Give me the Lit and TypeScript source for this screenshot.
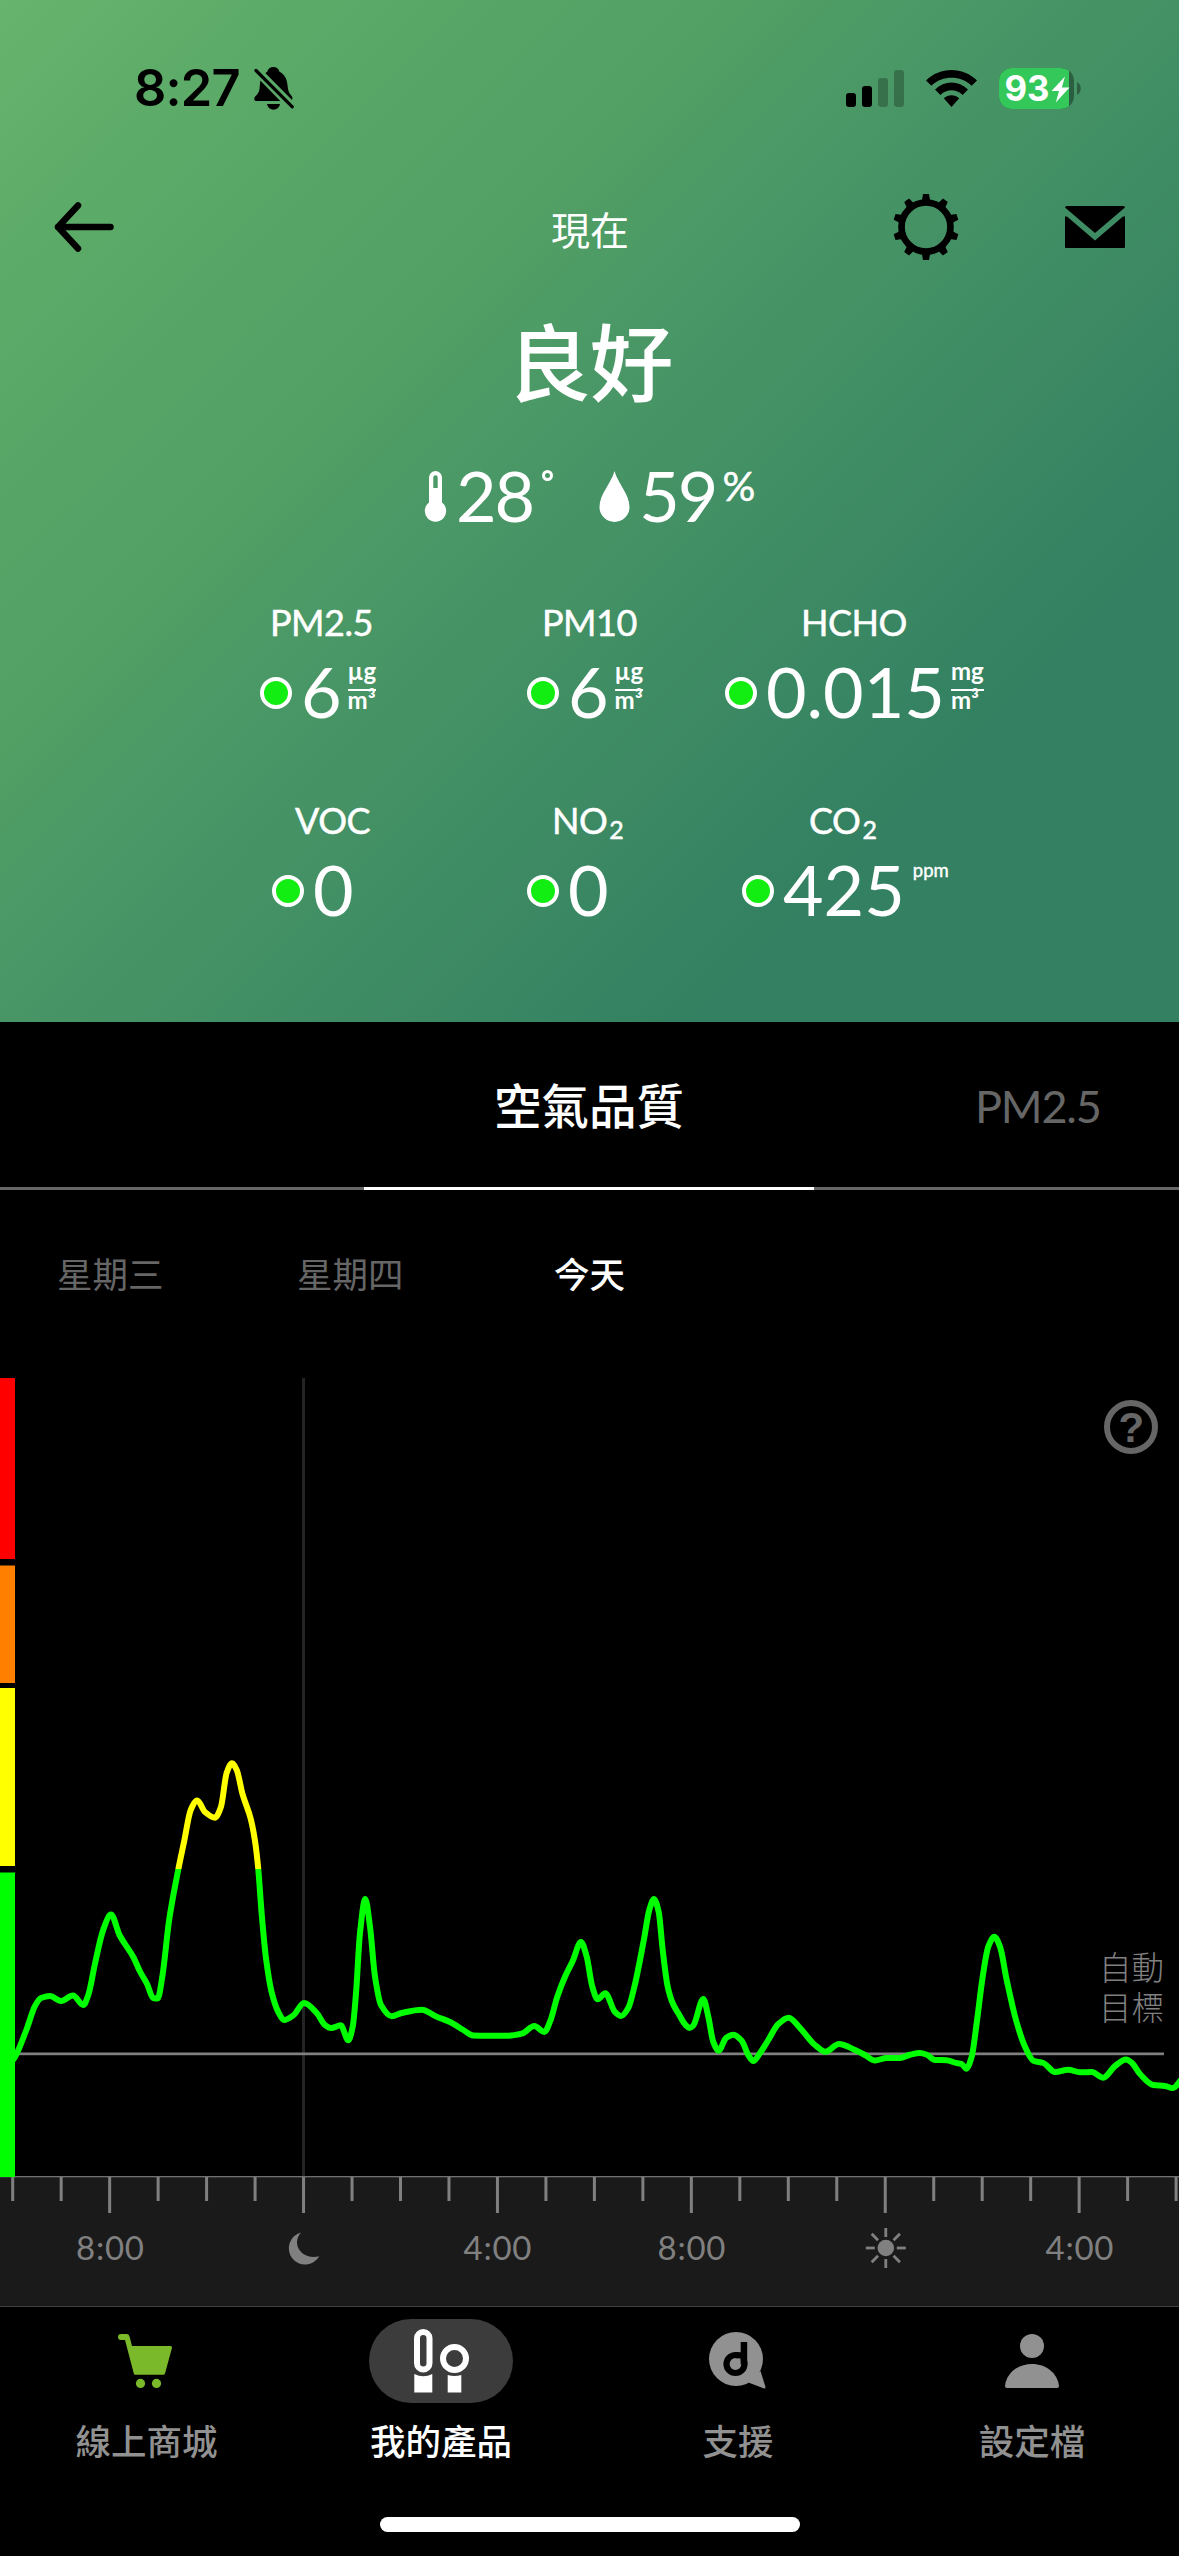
import { LitElement, html, svg, css } from "lit";
import { customElement } from "lit/decorators.js";

type Pt = [number, number];

interface Reading {
  label: string;
  sub?: string;
  value: string;
  top?: string;
  bottom?: string;
  labelInset: number;
  valueInset: number;
}

const READINGS: Reading[] = [
  { label: "PM2.5", value: "6", top: "µg", bottom: "m³", labelInset: 10, valueInset: 0 },
  { label: "PM10", value: "6", top: "µg", bottom: "m³", labelInset: 15, valueInset: 0 },
  { label: "HCHO", value: "0.015", top: "mg", bottom: "m³", labelInset: 76, valueInset: 0 },
  { label: "VOC", value: "0", labelInset: 35, valueInset: 12 },
  { label: "NO", sub: "2", value: "0", labelInset: 25, valueInset: 0 },
  { label: "CO", sub: "2", value: "425", top: "ppm", labelInset: 84, valueInset: 17 },
];

const SAMPLES: Pt[] = [
  [12, 2061], [15, 2057], [26.7, 2029], [35, 2006], [41, 1998], [50, 1996], [61, 2001], [73, 1995.5], [83.3, 2005],
  [88.3, 1995], [95, 1963.6], [103.3, 1929.6], [111, 1914.5], [119.5, 1935], [133.3, 1957], [140, 1971.5],
  [147.3, 1984.5], [153, 1998], [157.7, 1998.5], [162.3, 1976.7], [169.3, 1919], [178.3, 1869.5], [184.3, 1840.7],
  [190.7, 1810], [197.3, 1800.5], [205, 1812], [215, 1817.7], [221, 1806.7], [226.7, 1772.7], [232, 1763.3],
  [236.7, 1770], [242.7, 1794.7], [250.7, 1818.7], [255.3, 1843], [258.3, 1869.5], [261.7, 1914], [266, 1958.4],
  [271.7, 1992.4], [278.3, 2012], [284, 2020], [293.3, 2015.4], [304, 2003], [316.7, 2013], [325, 2025], [331, 2028],
  [340.7, 2025.3], [348.3, 2040.3], [352.7, 2026.7], [356, 1993.3], [360, 1933], [365.3, 1899], [370, 1926.7],
  [375, 1976.7], [381, 2005], [391.7, 2016.3], [401.7, 2013], [421.7, 2009.7], [436.7, 2016.7], [450, 2022],
  [463.3, 2030], [473.3, 2035.5], [486.7, 2035.7], [508.3, 2035.7], [521.7, 2033.7], [534.3, 2026], [544.3, 2032],
  [550, 2021.7], [557.3, 1996.7], [565, 1976.7], [572.7, 1961], [581, 1942], [586.7, 1956.7], [592.3, 1986.7],
  [597.7, 1999.3], [605.3, 1993.3], [615, 2012], [621, 2016], [628.3, 2008], [635, 1984], [644, 1939],
  [649.3, 1910], [654, 1899], [658.7, 1912], [662.7, 1950], [667.7, 1986.7], [672.7, 2003.3], [678.3, 2013.3],
  [686, 2025.5], [689.5, 2028], [693.3, 2025.5], [703.3, 1999], [708.3, 2016.7], [713.3, 2042], [718.7, 2050.7],
  [726, 2038], [733.3, 2034.7], [741.7, 2040.7], [748.3, 2055], [753.3, 2061], [760, 2053], [768.3, 2040],
  [778.3, 2024], [788.7, 2017.7], [800, 2028], [815, 2045], [825.3, 2051.7], [839, 2044], [855, 2050], [865, 2055],
  [875, 2060.5], [886.7, 2058], [900, 2058], [910, 2054.7], [920, 2053], [926.7, 2054.7], [935, 2060],
  [946.7, 2060.2], [955, 2062.7], [961.7, 2064], [966.3, 2068.7], [971.7, 2056.7], [976.7, 2023], [982.7, 1976.7],
  [988.3, 1946.7], [994.3, 1936.7], [1000, 1946.7], [1006.7, 1980], [1016, 2020], [1025, 2046.7], [1033.3, 2060.7],
  [1043.3, 2063], [1055, 2072], [1068.3, 2069.7], [1080, 2072.3], [1091.7, 2072], [1103.3, 2077.7], [1115, 2066],
  [1126, 2059.5], [1131.7, 2062.7], [1140, 2074], [1153.3, 2085], [1165, 2086], [1172.7, 2088], [1182, 2079],
];

/** Monotone cubic interpolation, so that peaks stay at the samples. */
function curve(p: Pt[]): string {
  const n = p.length;
  const d = p.slice(1).map((q, i) => (q[1] - p[i][1]) / (q[0] - p[i][0]));
  const m = p.map((_, i) => {
    if (i === 0) return d[0];
    if (i === n - 1) return d[n - 2];
    if (d[i - 1] * d[i] <= 0) return 0;
    return (2 * d[i - 1] * d[i]) / (d[i - 1] + d[i]);
  });
  let out = `M${p[0][0]} ${p[0][1]}`;
  for (let i = 0; i < n - 1; i++) {
    const h = (p[i + 1][0] - p[i][0]) / 3;
    out += `C${(p[i][0] + h).toFixed(2)} ${(p[i][1] + m[i] * h).toFixed(2)} ${(p[i + 1][0] - h).toFixed(2)} ${(
      p[i + 1][1] - m[i + 1] * h
    ).toFixed(2)} ${p[i + 1][0]} ${p[i + 1][1]}`;
  }
  return out;
}

@customElement("status-bar")
export class StatusBar extends LitElement {
  static styles = css`
    :host { display: flex; height: 174px; box-sizing: border-box; padding: 64px 98px 0 134px; justify-content: space-between; color: #000; }
    .left, .right { display: flex; height: 48px; align-items: center; }
    .time { font: 600 50.500px/48px Inter, sans-serif; letter-spacing: -0.8px; }
    .bell { margin-left: 13px; }
    .wifi { margin-left: 22px; }
    .battery { margin-left: 22px; }
    svg { display: block; overflow: visible; }
    .level { font: 700 35px Inter, sans-serif; fill: #fff; }
  `;
  render() {
    return html`
      <div class="left">
        <span class="time">8:27</span>
        <svg class="bell" width="42" height="48" viewBox="0 0 42 48">
          <path d="M20.300 3C23.500 3 25.800 4.600 26.500 7.700C31.500 10 34 15 34.500 21C35 27 36 29 38.300 31.500C39.500 33 39.800 34.500 39 36L12.500 9.300C13 8.500 13.500 8 14.200 7.700C15 4.600 17.200 3 20.300 3Z" />
          <path d="M7.300 16.500L27.300 37H3.500C1 37 .800 34.500 2 32.800C4 30.500 6 29 6.500 25C6.900 22 6.900 19.500 7.300 16.500Z" />
          <path d="M14 40H27C26.500 43.500 23.500 45.700 20.500 45.700S14.500 43.500 14 40Z" />
          <path d="M3 6.500L39.300 42.800" fill="none" stroke="#000" stroke-width="3.200" stroke-linecap="round" />
        </svg>
      </div>
      <div class="right">
        <svg width="58" height="37" viewBox="0 0 58 37">
          <rect x="0" y="23" width="10" height="14" rx="3" />
          <rect x="16" y="16" width="10" height="21" rx="3" />
          <rect x="32" y="8" width="10" height="29" rx="3" opacity=".25" />
          <rect x="48" y="0" width="10" height="37" rx="3" opacity=".25" />
        </svg>
        <svg class="wifi" width="51" height="37" viewBox="0 0 51 37">
          <path d="M0 10.500C14-3.500 37-3.500 51 10.500L45.600 15.800C34.500 5.200 16.500 5.200 5.400 15.800Z" />
          <path d="M9 19.500C18.500 10.300 32.500 10.300 42 19.500L36.600 24.900C30.200 18.800 20.800 18.800 14.400 24.900Z" />
          <path d="M17.800 28.300C22.200 24.300 28.800 24.300 33.200 28.300L25.500 37Z" />
        </svg>
        <svg class="battery" width="82" height="41" viewBox="0 0 82 41">
          <clipPath id="charge"><rect width="70" height="41" /></clipPath>
          <rect width="75" height="41" rx="13" opacity=".35" />
          <rect width="75" height="41" rx="13" fill="#34c759" clip-path="url(#charge)" />
          <path d="M78 14C83 16.500 83 24.500 78 27Z" opacity=".35" />
          <text class="level" x="5.500" y="33" textLength="45" lengthAdjust="spacingAndGlyphs">93</text>
          <path d="M66 8.500L52.500 23H60L56.800 34.500L70.500 19.500H62.800Z" fill="#fff" />
        </svg>
      </div>
    `;
  }
}

@customElement("air-summary")
export class AirSummary extends LitElement {
  static styles = css`
    :host { display: block; color: #fff; font-family: Lato, "Noto Sans CJK TC", sans-serif; }
    svg { display: block; overflow: visible; }
    .nav { display: grid; grid-template-columns: 54px 60px 1fr 66px 106px 60px 54px; align-items: center; height: 106px; color: #000; }
    .title { grid-column: 3; text-align: center; color: #fff; font: 400 39px/60px "Noto Sans CJK TC", sans-serif; margin: 2px 0 0 173px; }
    .state { margin: 24px 0 0 0; text-align: center; font: 500 84px/110px "Noto Sans CJK TC", sans-serif; height: 110px; letter-spacing: -1.500px; }
    .climate { display: flex; margin-top: 46px; padding-left: 424px; height: 72px; align-items: center; }
    .num { font-size: 70px; line-height: 70px; }
    .climate .num { letter-spacing: -2px; margin: -2px 0 0 9px; }
    .sup { align-self: flex-start; font-size: 41px; line-height: 41px; margin: 5px 0 0 6px; -webkit-text-stroke: .5px #fff; }
    .deg { align-self: flex-start; margin: 10px 46px 0 9px; width: 5px; height: 5px; border: 3.500px solid #fff; border-radius: 50%; }
    .grid { display: grid; grid-template-columns: 267px 198px 1fr; padding: 70px 0 0 260px; row-gap: 72px; }
    .cell { height: 126px; }
    .label { font-size: 36px; line-height: 40px; height: 40px; white-space: nowrap; letter-spacing: -.5px; -webkit-text-stroke: .5px #fff; }
    .sub { font-size: 25px; position: relative; top: 5px; margin-left: 2px; }
    .row { display: flex; align-items: center; height: 70px; margin-top: 16px; }
    .dot { width: 24px; height: 24px; border-radius: 50%; background: #12ee12; border: 4.500px solid #fff; flex: none; }
    .row .num { margin: -4px 0 0 9px; }
    .unit { display: flex; flex-direction: column; align-self: flex-start; margin: 0 0 0 6px; font-size: 24px; font-weight: 700; }
    .top { line-height: 26px; padding-bottom: 5px; }
    .bottom { border-top: 2px solid #fff; line-height: 17px; }
    .ppm .top { font-size: 18.500px; font-weight: 400; -webkit-text-stroke: .4px #fff; margin: 1px 0 0 2px; }
  `;
  render() {
    const teeth = Array.from({ length: 10 }, (_, i) => i * 36);
    return html`
      <div class="nav">
        <span></span>
        <svg width="60" height="50" viewBox="0 0 60 50">
          <path d="M56.500 25H4M24 3.500L4 25L24 46.500" fill="none" stroke="#000" stroke-width="6.500" stroke-linecap="round" stroke-linejoin="round" />
        </svg>
        <div class="title">現在</div>
        <svg width="66" height="66" viewBox="-33 -33 66 66">
          <circle r="24.500" fill="none" stroke="#000" stroke-width="6.700" />
          ${teeth.map((a) => svg`<path transform="rotate(${a})" d="M-4.200 -26L-3 -33H3L4.200 -26Z" />`)}
        </svg>
        <span></span>
        <svg width="60" height="42" viewBox="0 0 60 42">
          <path d="M1 0H59L60 1.500L30 27L0 1.500Z" />
          <path d="M0 10.500L2 10.500L30 34.500L58 10.500H60V41Q60 42 59 42H1Q0 42 0 41Z" />
        </svg>
      </div>
      <div class="state">良好</div>
      <div class="climate">
        <svg width="23" height="51" viewBox="0 0 23 51">
          <path fill-rule="evenodd" fill="#fff" d="M5 6.500A6.500 6.500 0 0 1 18 6.500V31.500A10.700 10.700 0 1 1 5 31.500ZM9.300 6.500V17H13.700V6.500A2.200 2.200 0 0 0 9.300 6.500Z" />
        </svg>
        <span class="num">28</span><span class="deg"></span>
        <svg width="31" height="51" viewBox="0 0 31 51">
          <path fill="#fff" d="M15.500 0C18.500 12 30.500 23 30.500 36A15 15 0 0 1 .5 36C.5 23 12.500 12 15.500 0Z" />
        </svg>
        <span class="num">59</span><span class="sup">%</span>
      </div>
      <div class="grid">
        ${READINGS.map(
          (r) => html`
            <div class="cell">
              <div class="label" style="padding-left:${r.labelInset}px">
                ${r.label}${r.sub ? html`<span class="sub">${r.sub}</span>` : ""}
              </div>
              <div class="row" style="padding-left:${r.valueInset}px">
                <span class="dot"></span><span class="num">${r.value}</span>
                ${r.top
                  ? html`<span class="unit ${r.bottom ? "" : "ppm"}">
                      <span class="top">${r.top}</span>
                      ${r.bottom ? html`<span class="bottom">${r.bottom}</span>` : ""}
                    </span>`
                  : ""}
              </div>
            </div>
          `,
        )}
      </div>
    `;
  }
}

@customElement("air-chart")
export class AirChart extends LitElement {
  static styles = css`
    :host { display: block; }
    svg { display: block; }
    .goal { font: 300 32.500px "Noto Sans CJK TC", sans-serif; fill: #808080; }
    .help { font: 700 42px "Liberation Sans", sans-serif; fill: #666; }
    .hour { font: 400 33px Lato, sans-serif; fill: #808080; }
  `;
  render() {
    const d = curve(SAMPLES);
    const ticks = Array.from({ length: 25 }, (_, i) => ({ x: 12.7 + i * 48.475, major: i % 4 === 2 || i === 6 }));
    const hours: [number, string][] = [[110, "8:00"], [497.5, "4:00"], [691.5, "8:00"], [1079.5, "4:00"]];
    return svg`
      <svg width="1179" height="929" viewBox="0 1378 1179 929">
        <defs>
          <clipPath id="fair"><rect x="15" y="1378" width="1164" height="491" /></clipPath>
          <clipPath id="good"><rect x="15" y="1869" width="1164" height="307" /></clipPath>
        </defs>
        <rect x="302" y="1378" width="3" height="798" fill="#242424" />
        <rect x="15" y="2052.500" width="1149" height="2.700" fill="#808080" />
        <g fill="none" stroke-width="6" stroke-linejoin="round">
          <path d=${d} stroke="#ff0" clip-path="url(#fair)" />
          <path d=${d} stroke="#0f0" clip-path="url(#good)" />
        </g>
        <circle cx="1131" cy="1427" r="24" fill="none" stroke="#666" stroke-width="6" />
        <text class="help" x="1131.300" y="1442" text-anchor="middle">?</text>
        <text class="goal"><tspan x="1099" y="1979.500">自動</tspan><tspan x="1099" y="2019.500">目標</tspan></text>
        <rect y="2177" width="1179" height="129" fill="#1a1a1a" />
        <rect y="2176" width="1179" height="1.300" fill="#707070" />
        <rect y="2306" width="1179" height="1" fill="#404040" />
        <rect y="1378" width="15" height="181" fill="#f00" />
        <rect y="1565.500" width="15" height="117.500" fill="#ff8000" />
        <rect y="1688" width="15" height="178" fill="#ff0" />
        <rect y="1872.500" width="15" height="304.500" fill="#0f0" />
        ${ticks.map((t) => svg`<rect x=${t.x - 1.5} y="2177" width="3" height=${t.major ? 36 : 24} fill="#808080" />`)}
        ${hours.map(([x, t]) => svg`<text class="hour" x=${x - 34} y="2260" textLength="68">${t}</text>`)}
        <path fill="#808080" d="M301 2232.500A16.300 16.300 0 1 0 319.300 2256.300C309 2259.500 297.500 2253 297 2243C296.900 2239 298.500 2235 301 2232.500Z" />
        <g transform="translate(885.800 2248)" fill="#808080" stroke="#808080" stroke-width="2.800">
          <circle r="8.300" stroke="none" />
          ${Array.from({ length: 8 }, (_, i) => svg`<path d="M0 -11V-20" transform="rotate(${i * 45})" />`)}
        </g>
      </svg>
    `;
  }
}

@customElement("tab-bar")
export class TabBar extends LitElement {
  static styles = css`
    :host { display: block; height: 249px; }
    .tabs { display: grid; grid-template-columns: 293px 296px 298px 290px; padding-top: 12px; }
    .tab { display: flex; flex-direction: column; align-items: center; color: #919191; font: 500 35.500px/52px "Noto Sans CJK TC", sans-serif; }
    .icon { display: flex; align-items: center; justify-content: center; width: 144px; height: 84px; border-radius: 42px; margin-bottom: 11px; }
    .on { color: #fff; }
    .on .icon { background: #3c3c3c; }
    .cart { margin-right: 3px; }
    .chat { margin-right: 3px; }
    .home { width: 420px; height: 15px; border-radius: 8px; background: #fff; margin: 51px auto 0; }
    svg { display: block; overflow: visible; }
  `;
  render() {
    return html`
      <div class="tabs">
        <div class="tab">
          <span class="icon">
            <svg class="cart" width="54" height="54" viewBox="0 0 54 54" fill="#7ab929">
              <path d="M3 0H9Q11 0 11.700 3L14 12H52.500Q54.300 12 54 13.800L47 39.500Q46.600 40.800 45.200 40.800H17.500Q16.200 40.800 15.800 39.500L7 6H3A3 3 0 0 1 3 0Z" />
              <circle cx="22.500" cy="49.400" r="4.600" /><circle cx="38.500" cy="49.400" r="4.600" />
            </svg>
          </span>線上商城
        </div>
        <div class="tab on">
          <span class="icon">
            <svg width="56" height="64" viewBox="0 0 56 64" fill="#fff">
              <rect x="4" y="3" width="12.500" height="37.500" rx="6.250" fill="none" stroke="#fff" stroke-width="6" />
              <circle cx="41.500" cy="29.500" r="11.500" fill="none" stroke="#fff" stroke-width="6" />
              <path d="M1.300 45Q10.300 49.500 19.300 45V63.500H1.300Z" />
              <path d="M34.700 46Q41.500 48 48.300 46V63.500H34.700Z" />
            </svg>
          </span>我的產品
        </div>
        <div class="tab">
          <span class="icon">
            <svg class="chat" width="56" height="56" viewBox="0 0 56 56">
              <circle cx="27" cy="26" r="27" fill="#919191" />
              <path d="M51.500 38L56.500 54Q56.500 56 54.500 55.300L38 49Z" fill="#919191" />
              <circle cx="26.500" cy="31" r="9" fill="none" stroke="#000" stroke-width="6.200" />
              <path d="M26 19.200H36V30L26 25Z" fill="#000" />
              <path d="M26.500 25.400H31.700V32H26.500Z" fill="#919191" />
              <rect x="31.700" y="9" width="6.500" height="22.500" fill="#000" />
            </svg>
          </span>支援
        </div>
        <div class="tab">
          <span class="icon">
            <svg width="54" height="54" viewBox="0 0 54 54" fill="#919191">
              <circle cx="27" cy="12" r="12" />
              <path d="M0 52C1.500 39 13 30 27 30S52.500 39 54 52Q54 54 52 54H2Q0 54 0 52Z" />
            </svg>
          </span>設定檔
        </div>
      </div>
      <div class="home"></div>
    `;
  }
}

@customElement("app-root")
export class AppRoot extends LitElement {
  static styles = css`
    :host { display: block; width: 1179px; height: 2556px; overflow: hidden; background: #000; }
    .header { height: 1022px; background: linear-gradient(135deg, #66b46d 0%, #5fad69 9%, #519f64 35%, #4b9966 42%, #338062 78%, #338062 100%); }
    .metrics { display: grid; grid-template-columns: 364px 450px 365px; height: 168px; }
    .metric { display: flex; align-items: center; justify-content: center; box-sizing: border-box; border-bottom: 3px solid #666; color: #666; font: 400 45px/60px Lato, sans-serif; padding-top: 3px; }
    .current { color: #fff; border-color: #fff; font: 500 47.500px/60px "Noto Sans CJK TC", sans-serif; padding-top: 0; padding-bottom: 2px; }
    .next { letter-spacing: -1.200px; justify-content: flex-start; padding-left: 161px; }
    .days { display: flex; height: 188px; box-sizing: border-box; padding: 56px 0 0 57px; color: #666; font: 400 35.500px/54px "Noto Sans CJK TC", sans-serif; }
    .day { width: 240px; }
    .today { color: #fff; font-weight: 500; margin-left: 17px; }
  `;
  render() {
    return html`
      <div class="header">
        <status-bar></status-bar>
        <air-summary></air-summary>
      </div>
      <div class="metrics">
        <div class="metric"></div>
        <div class="metric current">空氣品質</div>
        <div class="metric next">PM2.5</div>
      </div>
      <div class="days">
        <span class="day">星期三</span><span class="day">星期四</span><span class="day today">今天</span>
      </div>
      <air-chart></air-chart>
      <tab-bar></tab-bar>
    `;
  }
}
